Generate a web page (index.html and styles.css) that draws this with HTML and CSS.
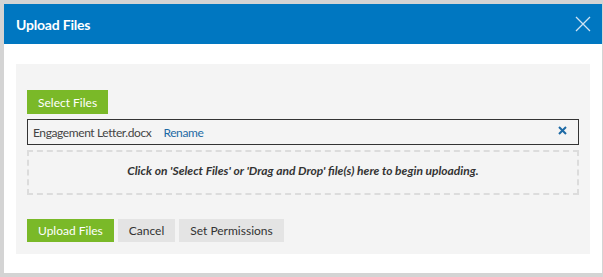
FILE: index.html
```
<!DOCTYPE html>
<html lang="en">
<head>
  <meta charset="UTF-8" />
  <title>Upload Files</title>
  <link rel="stylesheet" href="styles.css">
</head>
<body>
  <div class="modal">
    <div class="modal-header">
      <h2>Upload Files</h2>
      <svg class="close" width="16" height="16" viewBox="0 0 16 16">
        <path d="M1 1 L15 15 M15 1 L1 15" stroke="#cfe3f3" stroke-width="1.3" fill="none" />
      </svg>
    </div>
    <div class="modal-body">
      <div class="panel">
        <button class="btn btn-green">Select Files</button>
        <div class="file-row">
          <span class="file-name">Engagement Letter.docx</span>
          <a class="rename">Rename</a>
          <svg class="remove" width="9" height="9" viewBox="0 0 9 9">
            <path d="M1 1 L8 8 M8 1 L1 8" stroke="#1d6aa5" stroke-width="2" fill="none" />
          </svg>
        </div>
        <div class="drop-zone">Click on 'Select Files' or 'Drag and Drop' file(s) here to begin uploading.</div>
        <div class="actions">
          <button class="btn btn-green">Upload Files</button>
          <button class="btn btn-grey">Cancel</button>
          <button class="btn btn-grey">Set Permissions</button>
        </div>
      </div>
    </div>
  </div>
</body>
</html>
```

FILE: styles.css
```
body {
  margin: 0;
  background: #d4d4d4;
  font-family: Lato, "Liberation Sans", sans-serif;
}
.modal {
  margin: 4px 1px 4px 4px;
  height: 269px;
  background: #fff;
}
.modal-header {
  height: 40px;
  background: #0077c1;
  display: flex;
  align-items: center;
  justify-content: space-between;
  padding: 0 11px 0 12px;
}
.modal-header h2 {
  margin: 0;
  color: #fff;
  font-size: 14px;
  font-weight: bold;
  letter-spacing: -0.2px;
}
.modal-body {
  padding: 20px 12px 19px 12px;
}
.panel {
  background: #f4f4f4;
  padding: 26px 11px 12px 11px;
  height: 152px;
}
.btn {
  border: none;
  font-family: inherit;
  font-size: 12px;
  height: 24px;
  padding: 0 11px;
  cursor: pointer;
}
.btn-green {
  background: #7ab928;
  color: #fff;
}
.btn-grey {
  background: #e4e4e4;
  color: #333;
}
.file-row {
  margin-top: 5px;
  height: 24px;
  border: 1px solid #333;
  display: flex;
  align-items: center;
  padding: 0 5px;
  font-size: 12px;
  letter-spacing: -0.4px;
}
.file-name {
  color: #444;
}
.rename {
  color: #1d6aa5;
  margin-left: 12px;
}
.remove {
  margin-left: auto;
  margin-right: 6px;
  margin-bottom: 4px;
}
.drop-zone {
  margin-top: 5px;
  height: 36px;
  padding-bottom: 5px;
  border: 2px dashed #dcdcdc;
  display: flex;
  align-items: center;
  justify-content: center;
  font-size: 12px;
  font-style: italic;
  font-weight: bold;
  color: #333;
}
.actions {
  margin-top: 24px;
  display: flex;
  gap: 4px;
}
.actions .btn {
  height: 23px;
}
```
